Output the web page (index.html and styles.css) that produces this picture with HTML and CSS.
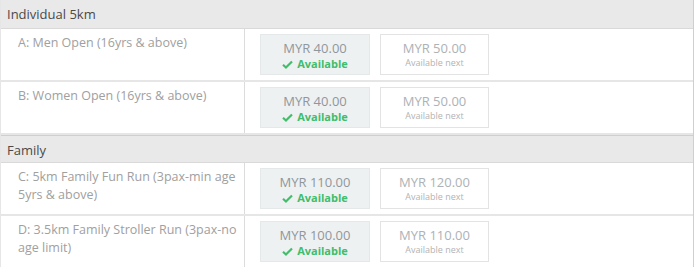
FILE: index.html
```html
<!DOCTYPE html>
<html>
<head>
<meta charset="utf-8">
<link rel="stylesheet" href="styles.css">
</head>
<body>
<div class="table">
  <div class="group">Individual 5km</div>
  <div class="row">
    <div class="label">A: Men Open (16yrs &amp; above)</div>
    <div class="prices">
      <div class="price current"><div class="amt">MYR 40.00</div><div class="status"><svg class="check" viewBox="0 0 12 10" width="11" height="9"><path d="M1 5.2 L4.3 8.3 L11 1.6" fill="none" stroke="currentColor" stroke-width="2.4"/></svg>Available</div></div>
      <div class="price next"><div class="amt">MYR 50.00</div><div class="note">Available next</div></div>
    </div>
  </div>
  <div class="row">
    <div class="label">B: Women Open (16yrs &amp; above)</div>
    <div class="prices">
      <div class="price current"><div class="amt">MYR 40.00</div><div class="status"><svg class="check" viewBox="0 0 12 10" width="11" height="9"><path d="M1 5.2 L4.3 8.3 L11 1.6" fill="none" stroke="currentColor" stroke-width="2.4"/></svg>Available</div></div>
      <div class="price next"><div class="amt">MYR 50.00</div><div class="note">Available next</div></div>
    </div>
  </div>
  <div class="group">Family</div>
  <div class="row">
    <div class="label">C: 5km Family Fun Run (3pax-min age 5yrs &amp; above)</div>
    <div class="prices">
      <div class="price current"><div class="amt">MYR 110.00</div><div class="status"><svg class="check" viewBox="0 0 12 10" width="11" height="9"><path d="M1 5.2 L4.3 8.3 L11 1.6" fill="none" stroke="currentColor" stroke-width="2.4"/></svg>Available</div></div>
      <div class="price next"><div class="amt">MYR 120.00</div><div class="note">Available next</div></div>
    </div>
  </div>
  <div class="row">
    <div class="label">D: 3.5km Family Stroller Run (3pax-no age limit)</div>
    <div class="prices">
      <div class="price current"><div class="amt">MYR 100.00</div><div class="status"><svg class="check" viewBox="0 0 12 10" width="11" height="9"><path d="M1 5.2 L4.3 8.3 L11 1.6" fill="none" stroke="currentColor" stroke-width="2.4"/></svg>Available</div></div>
      <div class="price next"><div class="amt">MYR 110.00</div><div class="note">Available next</div></div>
    </div>
  </div>
</div>
</body>
</html>
```
FILE: styles.css
```css
html, body {
  margin: 0;
  padding: 0;
  background: #fff;
}
body {
  font-family: "Open Sans", "DejaVu Sans", sans-serif;
}
.table {
  width: 692px;
  border-left: 1px solid #e6e6e6;
  border-right: 1px solid #cfcfcf;
}
.group {
  background: #e9e9e9;
  color: #4a4a4a;
  font-size: 13px;
  line-height: 18px;
  height: 28px;
  box-sizing: border-box;
  padding: 5px 6px;
  border-top: 1px solid #cfcfcf;
  border-bottom: 1px solid #d9d9d9;
}
.table > .group:first-child {
  border-top: none;
  height: 29px;
  padding-top: 5px;
}
.row {
  display: flex;
  border-bottom: 2px solid #e6e6e6;
}
.row:last-child { border-bottom: none; }
.label {
  width: 226px;
  flex: none;
  padding: 5px 0 0 17px;
  color: #a0a0a0;
  font-size: 12.5px;
  line-height: 18px;
  border-right: 1px solid #dcdcdc;
}
.prices {
  display: flex;
  gap: 10px;
  padding: 5px 0 5px 15px;
}
.price {
  box-sizing: border-box;
  height: 41px;
  text-align: center;
  padding-top: 5px;
}
.current {
  width: 110px;
  background: #eef1f1;
  border: 1px solid #e4e8e8;
}
.next {
  width: 109px;
  background: #fff;
  border: 1px solid #e3e3e3;
}
.amt {
  color: #8f979d;
  font-size: 13px;
  line-height: 16px;
}
.next .amt { color: #adb2b6; }
.status {
  color: #41bd6c;
  font-size: 11px;
  font-weight: 700;
  line-height: 15px;
}
.check {
  vertical-align: -1px;
  margin-right: 4px;
}
.note {
  color: #b3b3b3;
  font-size: 9px;
  line-height: 14px;
}
```
